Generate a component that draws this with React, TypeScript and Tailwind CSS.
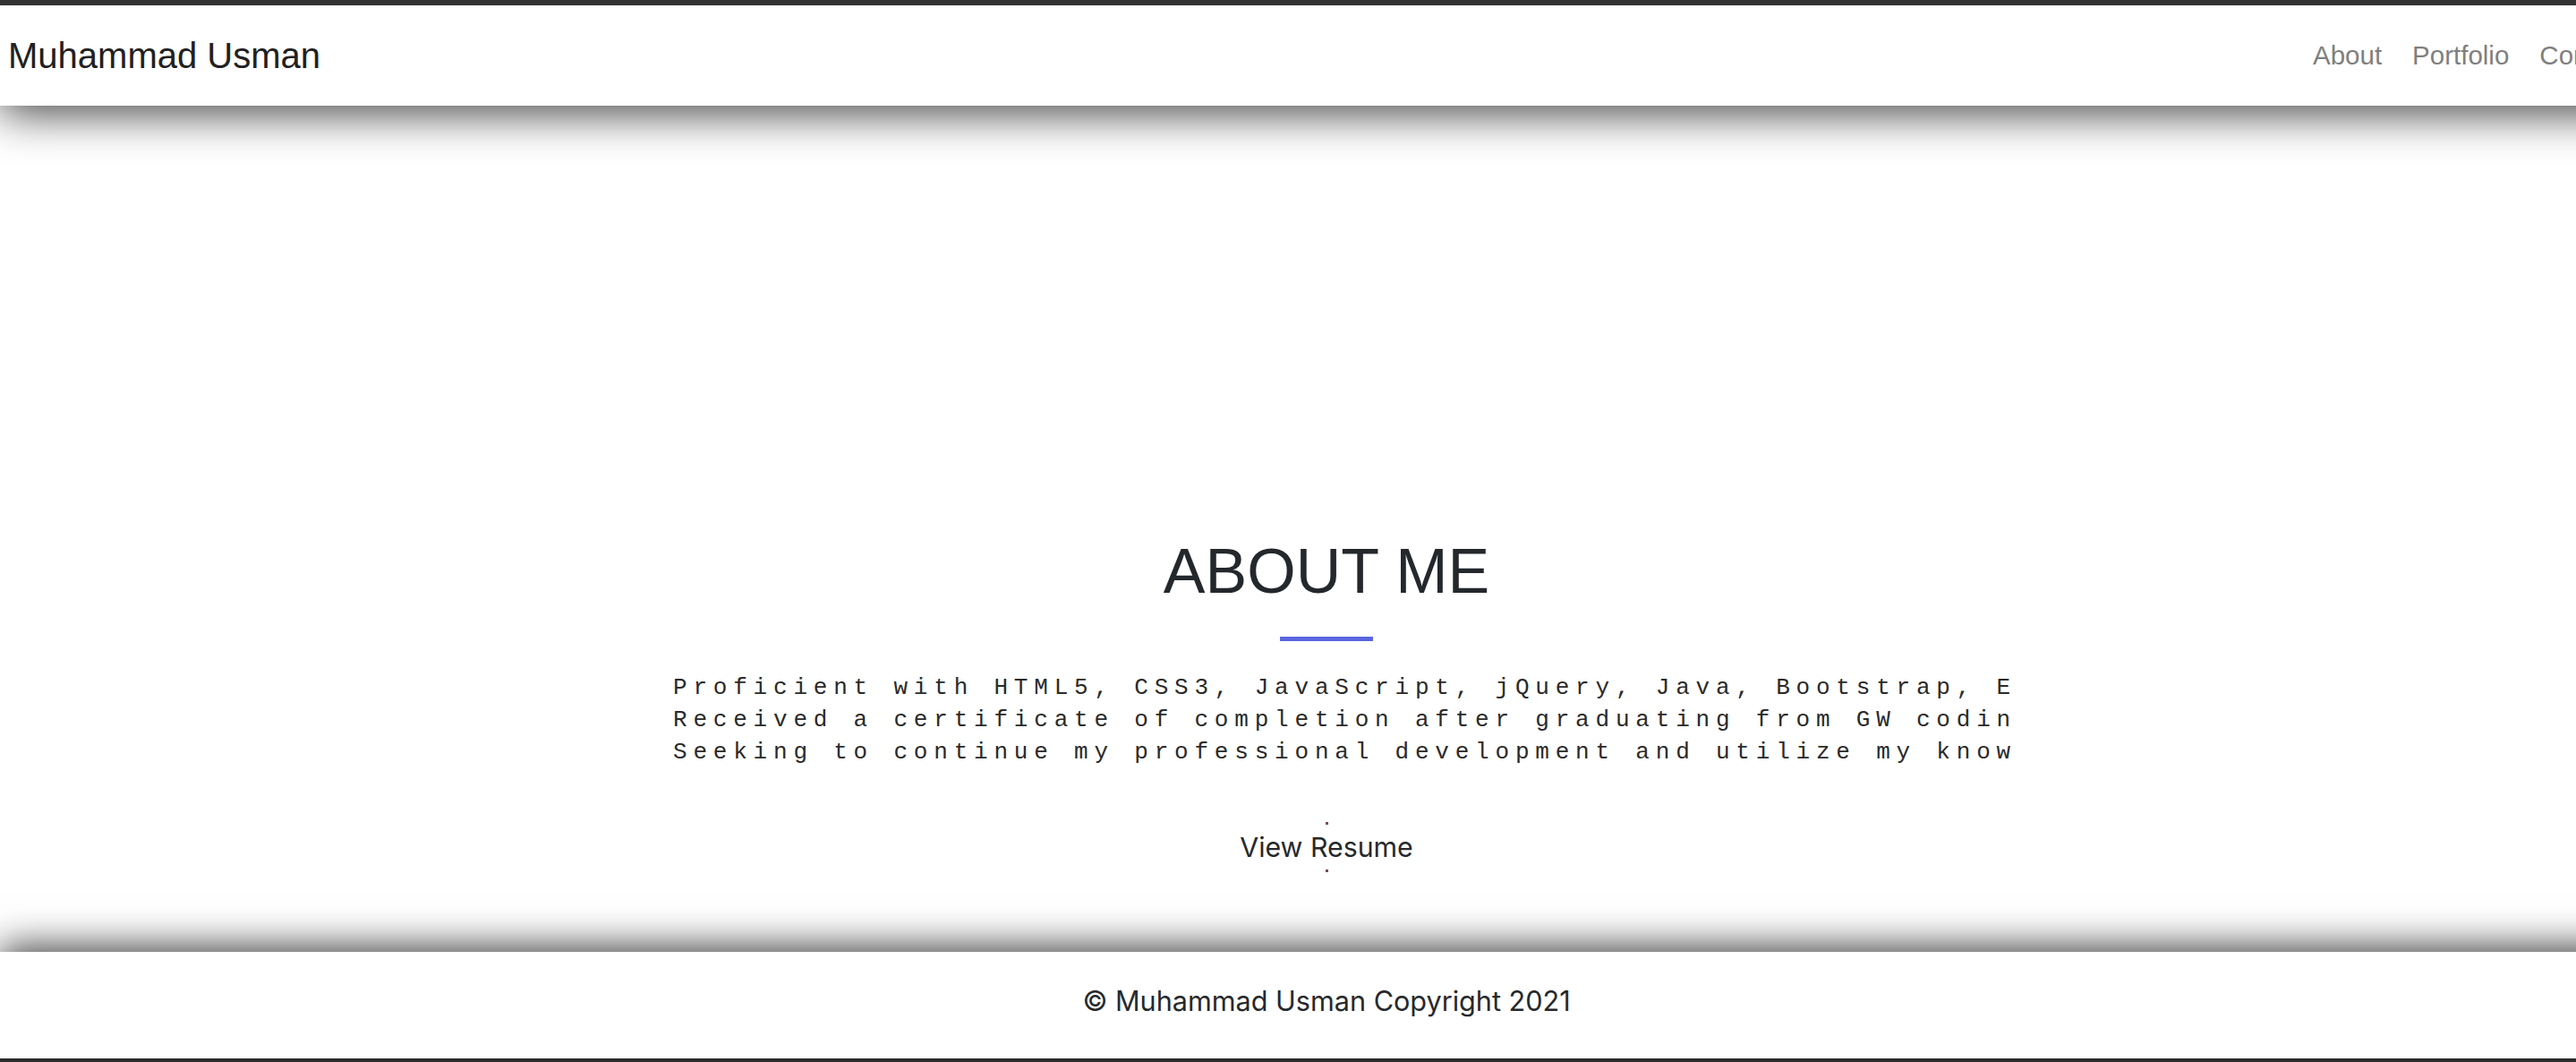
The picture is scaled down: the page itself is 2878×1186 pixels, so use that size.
import React from "react";

const lines = [
  "Proficient with HTML5, CSS3, JavaScript, jQuery, Java, Bootstrap, Express, Node.js, MySQL, MongoDB and React.",
  "Received a certificate of completion after graduating from GW coding boot camp in full stack web development.",
  "Seeking to continue my professional development and utilize my knowledge and skills as a web developer.",
];

const links = ["About", "Portfolio", "Contact"];

const Navbar: React.FunctionComponent = () => {
  return (
    <nav className="relative z-10 flex h-[118px] items-center justify-between border-t-[6px] border-[#333333] bg-white pl-[9px] pr-[8px] shadow-[0_8px_50px_rgba(0,0,0,0.75)]">
      <div className="text-[40px] leading-[48px] text-[#212121] font-['Liberation_Sans',Arial,sans-serif]">
        Muhammad Usman
      </div>
      <ul className="flex items-center">
        {links.map((link) => (
          <li
            key={link}
            className="px-[17px] text-[29.5px] leading-[36px] text-[#7f7f7f] font-['Liberation_Sans',Arial,sans-serif]"
          >
            {link}
          </li>
        ))}
      </ul>
    </nav>
  );
};

const About: React.FunctionComponent = () => {
  return (
    <main className="flex h-[945px] flex-col items-center pt-[478px]">
      <h1 className="text-[70px] leading-[84px] text-[#24282c] font-['Liberation_Sans',Arial,sans-serif]">
        ABOUT ME
      </h1>
      <div className="mt-[31px] h-[5px] w-[104px] bg-[#5a66e0]"></div>
      <div className="ml-[41px] mt-[34px] w-[1501px] overflow-hidden">
        {lines.map((line) => (
          <p
            key={line}
            className="whitespace-nowrap text-[26px] leading-[36px] tracking-[6.8px] text-[#2a2a2a] font-['Liberation_Mono','Courier_New',monospace]"
          >
            {line}
          </p>
        ))}
      </div>
      <button className="mt-[60px] flex flex-col items-center">
        <span className="h-[3px] w-[3px] bg-[#7a4a55]"></span>
        <span className="my-[7px] text-[30.3px] leading-[36px] text-[#26292c] font-['Inter',sans-serif]">
          View Resume
        </span>
        <span className="h-[3px] w-[3px] bg-[#7a4a55]"></span>
      </button>
    </main>
  );
};

const Footer: React.FunctionComponent = () => {
  return (
    <footer className="relative z-10 flex h-[123px] justify-center border-b-[4px] border-[#2b2b2b] bg-white pt-[37px] shadow-[0_-6px_40px_rgba(0,0,0,0.75)]">
      <p className="text-[30.6px] leading-[36px] text-[#26292c] font-['Inter',sans-serif]">
        © Muhammad Usman Copyright 2021
      </p>
    </footer>
  );
};

export default function App() {
  return (
    <div className="h-screen w-full overflow-hidden bg-white">
      <div className="flex w-[2964px] flex-col">
        <Navbar />
        <About />
        <Footer />
      </div>
    </div>
  );
}
